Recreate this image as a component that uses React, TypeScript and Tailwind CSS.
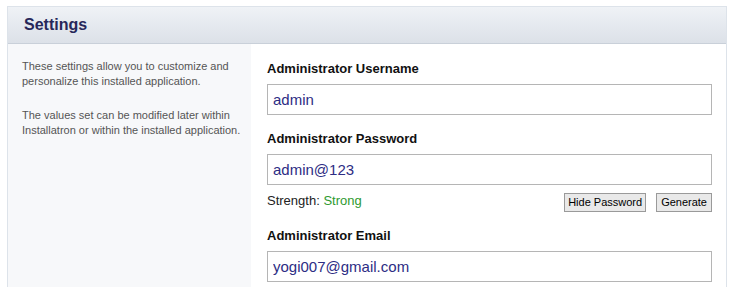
import React from 'react';

const fieldInput =
  'block w-full h-[31px] border border-[#b5b5b5] bg-white px-[5px] text-[15px] text-[#2d2d84] outline-none';

export default function App() {
  return (
    <div className="w-[732px] h-[287px] overflow-hidden bg-white pt-[6px] font-['Liberation_Sans',Arial,sans-serif]">
      <div className="ml-[7px] w-[720px] border border-[#dde3ea] bg-white">
        {/* Header */}
        <div className="h-[37px] border-b border-[#c9d0d9] bg-gradient-to-b from-[#eff2f6] to-[#dce1e8] pl-[16px] pt-[9px]">
          <h2 className="text-[16px] font-bold leading-[18px] text-[#27275a]">Settings</h2>
        </div>

        <div className="flex">
          {/* Sidebar */}
          <div className="w-[243px] shrink-0 bg-[#f7f8fa] pl-[14px] pr-[8px] pt-[15px] h-[260px] text-[11px] leading-[15px] text-[#555]">
            <p>These settings allow you to customize and personalize this installed application.</p>
            <p className="mt-[19px]">
              The values set can be modified later within Installatron or within the installed application.
            </p>
          </div>

          {/* Form */}
          <div className="flex-1 pl-[16px] pr-[14px] pt-[17px]">
            <label className="block text-[13px] font-bold leading-[15px] text-[#111]">Administrator Username</label>
            <input className={`${fieldInput} mt-[8px]`} defaultValue="admin" />

            <label className="mt-[16px] block text-[13px] font-bold leading-[15px] text-[#111]">
              Administrator Password
            </label>
            <input className={`${fieldInput} mt-[8px]`} defaultValue="admin@123" />

            <div className="mt-[8px] flex items-start">
              <span className="text-[13px] leading-[15px] text-[#222]">
                Strength: <span className="text-[#2f9a2f]">Strong</span>
              </span>
              <div className="ml-auto flex gap-[10px]">
                <button className="h-[19px] border border-[#9a9a9a] bg-[#e9e9e9] px-[3px] text-[11px] leading-[15px] text-black">
                  Hide Password
                </button>
                <button className="h-[19px] border border-[#9a9a9a] bg-[#e9e9e9] px-[4px] text-[11px] leading-[15px] text-black">
                  Generate
                </button>
              </div>
            </div>

            <label className="mt-[16px] block text-[13px] font-bold leading-[15px] text-[#111]">
              Administrator Email
            </label>
            <input className={`${fieldInput} mt-[8px]`} defaultValue="yogi007@gmail.com" />
          </div>
        </div>
      </div>
    </div>
  );
}
